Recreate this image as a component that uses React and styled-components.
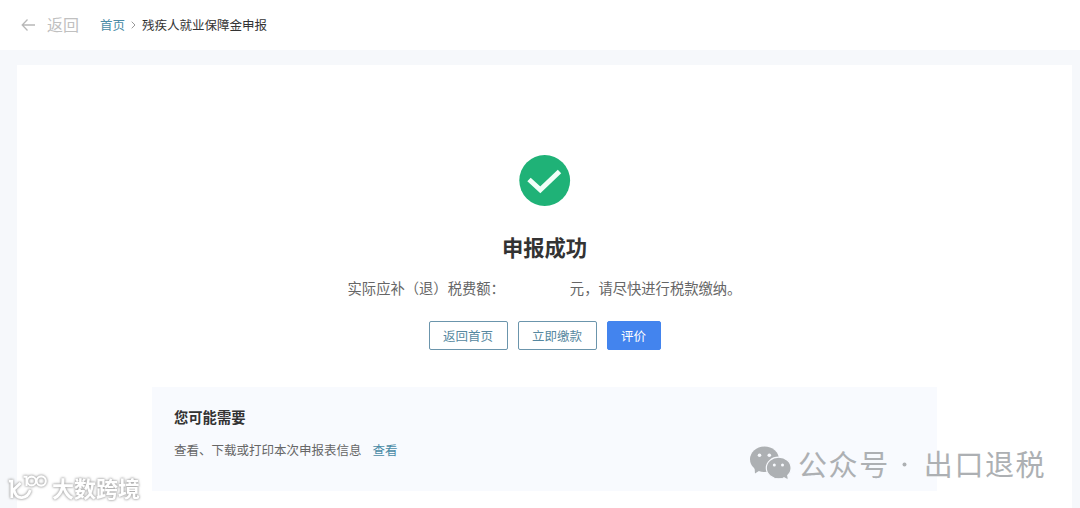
import styled, { createGlobalStyle } from 'styled-components';

const GlobalStyle = createGlobalStyle`
    * {
        box-sizing: border-box;
    }

    body {
        margin: 0;
        background-color: #f6f8fb;
        color: #333;
        font-family: "Noto Sans CJK SC", sans-serif;
        overflow: hidden;
    }
`;

const Page = styled.div`
    position: relative;
    display: flex;
    flex-direction: column;
    height: 508px;
    overflow: hidden;
`;

const Header = styled.header`
    display: flex;
    align-items: center;
    flex-shrink: 0;
    height: 50px;
    padding: 0 0 1px 21px;
    background-color: white;
`;

const BackButton = styled.a`
    display: flex;
    align-items: center;
    width: 79px;
    color: #c0c0c0;
    font-size: 16px;
    line-height: 24px;
    cursor: pointer;

    & > svg {
        margin-right: 11px;
    }

    & > span {
        padding-bottom: 2px;
    }
`;

const Breadcrumb = styled.nav`
    display: flex;
    align-items: center;
    font-size: 12.5px;
    line-height: 20px;
    color: #333;

    & > svg {
        margin: 0 6px 0 6px;
    }
`;

const TextLink = styled.a`
    color: #4a8ba6;
    cursor: pointer;
`;

const Panel = styled.main`
    display: flex;
    flex-direction: column;
    align-items: center;
    flex: 1;
    margin: 15px 8px 0 17px;
    padding-top: 90px;
    background-color: white;
`;

const Title = styled.h1`
    margin: 23px 0 0;
    font-size: 21.3px;
    font-weight: 700;
    line-height: 34px;
`;

const Message = styled.p`
    display: flex;
    margin: 14px 0 0;
    color: #666;
    font-size: 14.3px;
    line-height: 20px;
`;

const Amount = styled.span`
    width: 65px;
`;

const Actions = styled.div`
    display: flex;
    gap: 10px;
    margin-top: 23px;
`;

const Button = styled.button`
    width: ${(props) => (props.$primary ? '54px' : '79px')};
    height: 29px;
    padding: 0;
    border: 1px solid ${(props) => (props.$primary ? '#4384ee' : '#6b95ac')};
    border-radius: 2px;
    background-color: ${(props) => (props.$primary ? '#4384ee' : 'white')};
    color: ${(props) => (props.$primary ? 'white' : '#5688a0')};
    font-family: inherit;
    font-size: 12.5px;
    line-height: 26px;
    cursor: pointer;
`;

const Suggestion = styled.section`
    width: 785px;
    height: 104px;
    margin-top: 37px;
    padding: 19px 22px;
    background-color: #f8fafe;
`;

const SuggestionTitle = styled.h2`
    margin: 0;
    font-size: 14.3px;
    font-weight: 700;
    line-height: 22px;
`;

const SuggestionText = styled.p`
    display: flex;
    gap: 11px;
    margin: 12px 0 0;
    color: #666;
    font-size: 12.5px;
    line-height: 20px;
`;

const AccountMark = styled.div`
    position: absolute;
    left: 749px;
    top: 441px;
    display: flex;
    align-items: center;
    color: #adb0b3;
    font-size: 29px;
    line-height: 42px;
    letter-spacing: 1.6px;

    & > svg {
        margin: 1px 6px 0 0;
    }
`;

const Dot = styled.span`
    width: 3px;
    height: 3px;
    margin: 3px 18px 0 13px;
    border-radius: 50%;
    background-color: #adb0b3;
    box-shadow: 0 0 0 0.5px #adb0b3;
`;

const SiteMark = styled.div`
    position: absolute;
    left: 8px;
    top: 471px;
    display: flex;
    align-items: center;
    color: white;
    font-size: 22px;
    font-weight: 700;
    line-height: 32px;
    filter: drop-shadow(0 0 1px #aaa) drop-shadow(0 0 1px #bbb);

    & > svg {
        margin-right: 4px;
    }
`;

const BackIcon = () => (
    <svg width="15" height="14" viewBox="0 0 15 14" fill="none" stroke="#b8b8b8" strokeWidth="1.3">
        <path d="M14 7H1.5M6.5 1.5L1.2 7l5.3 5.5" />
    </svg>
);

const Separator = () => (
    <svg width="5" height="8" viewBox="0 0 5 8" fill="none" stroke="#999" strokeWidth="1">
        <path d="M.7 .7L4 4 .7 7.3" />
    </svg>
);

const SuccessIcon = () => (
    <svg width="52" height="52" viewBox="0 0 52 52">
        <circle cx="25.7" cy="25.5" r="25.4" fill="#1fb277" />
        <path d="M10 24.5L21.3 34.8 40.5 16.5" fill="none" stroke="#f1fff8" strokeWidth="5" />
    </svg>
);

const WechatIcon = () => (
    <svg width="43" height="42" viewBox="0 0 43 42" fill="#adb0b3">
        <path d="M5.5 25L6 31.5 13 27z" />
        <ellipse cx="15.5" cy="17.3" rx="14.5" ry="12.8" />
        <g stroke="#f8fafe" strokeWidth="1.2">
            <path d="M33 34l6 3.5-.7-7z" />
            <ellipse cx="29.7" cy="26" rx="12.4" ry="10.8" />
        </g>
        <path d="M33 34l5.6 3-.8-6z" />
        <g fill="#f8fafe">
            <circle cx="10.5" cy="13.3" r="1.8" />
            <circle cx="20.3" cy="13.3" r="1.8" />
            <circle cx="25.3" cy="23" r="1.5" />
            <circle cx="33.5" cy="23" r="1.5" />
        </g>
    </svg>
);

const SiteLogo = () => (
    <svg width="40" height="32" viewBox="0 0 40 32" fill="none" stroke="white" strokeWidth="2.8">
        <path d="M.8 10.2H3.8V27M12.6 12L5.8 18.5C7 24 10 27 14 26.6 18.5 26.2 21 23 22.3 19" />
        <path d="M15.5 5.8h3V15" strokeWidth="2.1" />
        <circle cx="23.6" cy="10" r="4.4" strokeWidth="2.1" />
        <circle cx="33.2" cy="10" r="4.6" strokeWidth="2.1" />
    </svg>
);

const App = () => {
    return (
        <Page>
            <GlobalStyle />
            <Header>
                <BackButton>
                    <BackIcon />
                    <span>返回</span>
                </BackButton>
                <Breadcrumb>
                    <TextLink>首页</TextLink>
                    <Separator />
                    <span>残疾人就业保障金申报</span>
                </Breadcrumb>
            </Header>
            <Panel>
                <SuccessIcon />
                <Title>申报成功</Title>
                <Message>
                    <span>实际应补（退）税费额：</span>
                    <Amount />
                    <span>元，请尽快进行税款缴纳。</span>
                </Message>
                <Actions>
                    <Button>返回首页</Button>
                    <Button>立即缴款</Button>
                    <Button $primary>评价</Button>
                </Actions>
                <Suggestion>
                    <SuggestionTitle>您可能需要</SuggestionTitle>
                    <SuggestionText>
                        <span>查看、下载或打印本次申报表信息</span>
                        <TextLink>查看</TextLink>
                    </SuggestionText>
                </Suggestion>
            </Panel>
            <AccountMark>
                <WechatIcon />
                <span>公众号</span>
                <Dot />
                <span>出口退税</span>
            </AccountMark>
            <SiteMark>
                <SiteLogo />
                大数跨境
            </SiteMark>
        </Page>
    );
};

export default App;
